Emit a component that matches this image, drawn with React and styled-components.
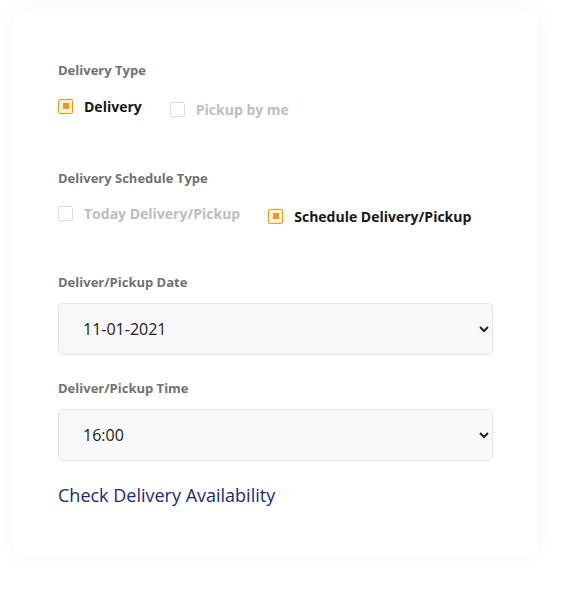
import React, { useState } from "react";
import styled, { createGlobalStyle } from "styled-components";

const GlobalStyle = createGlobalStyle`
  body {
    margin: 0;
    background: #ffffff;
    font-family: "Open Sans", "Noto Sans", sans-serif;
  }
`;

const Page = styled.div`
  padding: 10px 0 37px 13px;
`;

const Card = styled.div`
  width: 525px;
  box-sizing: border-box;
  padding: 51px 45px 49px 45px;
  background: #ffffff;
  border-radius: 9px;
  box-shadow: 0 0 22px rgba(0, 0, 0, 0.045);
  display: flex;
  flex-direction: column;
`;

const Label = styled.div`
  font-size: 13px;
  line-height: 18px;
  font-weight: 700;
  color: #717171;
  margin-top: ${(p) => p.$top || 0}px;
`;

const OptionRow = styled.div`
  display: flex;
  align-items: flex-start;
  gap: 28px;
  height: 22px;
  margin-top: ${(p) => p.$top || 0}px;
`;

const Option = styled.label`
  display: flex;
  align-items: center;
  gap: 11px;
  height: 22px;
  margin-top: ${(p) => (p.$low ? 3 : 0)}px;
  font-size: 14px;
  font-weight: 700;
  color: ${(p) => (p.$checked ? "#161616" : "#bdbdbd")};
  cursor: pointer;
`;

const Box = styled.span`
  width: 15px;
  height: 15px;
  box-sizing: border-box;
  border-radius: 2px;
  border: 1px solid ${(p) => (p.$checked ? "#f7941d" : "#dedede")};
  background: ${(p) => (p.$checked ? "#fff3e4" : "#ffffff")};
  display: flex;
  align-items: center;
  justify-content: center;

  &::after {
    content: "";
    width: 6px;
    height: 6px;
    background: #f7941d;
    display: ${(p) => (p.$checked ? "block" : "none")};
  }
`;

const Select = styled.select`
  margin-top: 12px;
  width: 435px;
  height: 52px;
  padding: 0 8px 0 20px;
  font-family: "Open Sans", "Noto Sans", sans-serif;
  font-size: 16px;
  color: #212121;
  background-color: #f8f8f8;
  border: 1px solid #e4e4e4;
  border-radius: 5px;
  outline: none;
`;

const Link = styled.a`
  margin-top: 22px;
  font-size: 18px;
  line-height: 24px;
  color: #1b2780;
  text-decoration: none;
  cursor: pointer;
`;

const Choice = ({ checked, low, children, onClick }) => (
  <Option $checked={checked} $low={low} onClick={onClick}>
    <Box $checked={checked} />
    {children}
  </Option>
);

export default function App() {
  const [type, setType] = useState("delivery");
  const [schedule, setSchedule] = useState("schedule");

  return (
    <Page>
      <GlobalStyle />
      <Card>
        <Label>Delivery Type</Label>
        <OptionRow $top={16}>
          <Choice checked={type === "delivery"} onClick={() => setType("delivery")}>
            Delivery
          </Choice>
          <Choice low checked={type === "pickup"} onClick={() => setType("pickup")}>
            Pickup by me
          </Choice>
        </OptionRow>

        <Label $top={52}>Delivery Schedule Type</Label>
        <OptionRow $top={15}>
          <Choice checked={schedule === "today"} onClick={() => setSchedule("today")}>
            Today Delivery/Pickup
          </Choice>
          <Choice low checked={schedule === "schedule"} onClick={() => setSchedule("schedule")}>
            Schedule Delivery/Pickup
          </Choice>
        </OptionRow>

        <Label $top={49}>Deliver/Pickup Date</Label>
        <Select defaultValue="11-01-2021">
          <option>11-01-2021</option>
          <option>12-01-2021</option>
          <option>13-01-2021</option>
        </Select>

        <Label $top={24}>Deliver/Pickup Time</Label>
        <Select defaultValue="16:00">
          <option>14:00</option>
          <option>15:00</option>
          <option>16:00</option>
          <option>17:00</option>
        </Select>

        <Link>Check Delivery Availability</Link>
      </Card>
    </Page>
  );
}
